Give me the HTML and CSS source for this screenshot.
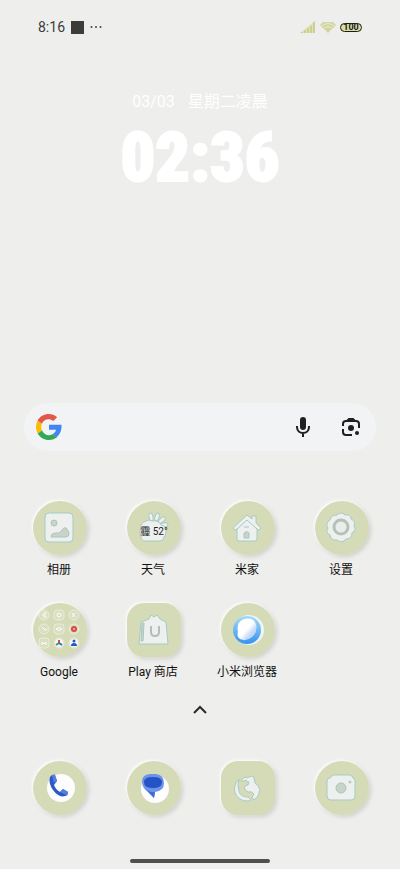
FILE: index.html
```html
<!DOCTYPE html>
<html lang="zh-CN">
<head>
<meta charset="utf-8">
<meta name="viewport" content="width=device-width, initial-scale=1">
<title>桌面</title>
<link rel="stylesheet" href="styles.css">
</head>
<body>
<header class="status">
	<div class="status_left">
		<span>8:16</span>
		<span class="block"></span>
		<svg width="12" height="4" viewBox="0 0 12 4"><circle cx="1.5" cy="2" r="1"/><circle cx="6" cy="2" r="1"/><circle cx="10.5" cy="2" r="1"/></svg>
	</div>
	<div class="status_right">
		<svg width="16" height="12" viewBox="0 0 16 12"><path d="M0 12L15 0v12z" fill="#dfe1bd"/><path d="M1 12v-1h2v1zM4 12V9h2v3zM7 12V7h2v5zM10 12V5h2v7zM13 12V2l2-2v12z" fill="#cdd08f"/></svg>
		<svg width="16" height="12" viewBox="0 0 16 12"><path d="M0 4l3-3h10l3 3-8 8z" fill="#d3d69f"/><path d="M2 5Q8 0 14 5M4 7Q8 4 12 7" fill="none" stroke="#e8e9d6"/></svg>
		<span class="battery">100</span>
	</div>
</header>

<main>
	<section class="clock">
		<div class="date"><span>03/03</span><span>星期二凌晨</span></div>
		<time class="time">02:36</time>
	</section>

	<form class="search">
		<svg width="26" height="26" viewBox="0 0 48 48">
			<path fill="#4285f4" d="M47 20H24v9h13c-1 4-3 6-6 8l7 6c6-5 10-13 9-23z"/>
			<path fill="#34a853" d="M24 48c6 0 11-2 15-5l-8-6c-8 5-17 1-20-7l-8 6c4 7 12 12 21 12z"/>
			<path fill="#fbbc05" d="M11 30c-2-4-2-8 0-12l-8-6c-4 8-4 16 0 24z"/>
			<path fill="#e45849" d="M11 18c3-9 14-11 21-5l7-7C28-4 10-1 3 12z"/>
		</svg>
		<input type="search" aria-label="Google 搜索">
		<button type="button" aria-label="语音搜索">
			<svg width="16" height="22" viewBox="0 0 16 22"><rect x="5" y="1" width="6" height="13" rx="3" fill="#1e2023"/><path d="M2 10v1c0 8 12 8 12 0v-1M8 17v4" fill="none" stroke="#1e2023" stroke-width="2"/></svg>
		</button>
		<button type="button" aria-label="智能镜头">
			<svg width="20" height="20" viewBox="0 0 20 20" fill="none" stroke="#1e2023" stroke-width="2"><path d="M2 9V7q0-3 3-3h10q3 0 3 3v4M2 12v3q0 3 3 3h6"/><path d="M6 4l2-2h4l2 2" fill="#1e2023"/><circle cx="10" cy="11" r="3" fill="#1e2023" stroke="none"/><circle cx="16" cy="16" r="2" fill="#1e2023" stroke="none"/></svg>
		</button>
	</form>

	<nav class="apps">
		<a href="#"><span class="icon">
			<svg viewBox="0 0 54 54"><rect class="line" x="12" y="12" width="28" height="29" rx="4"/><circle class="inner" cx="21" cy="22" r="3"/><path class="inner" d="M18 36q0-4 5-4 4 1 6-3 3-4 5-1l2 4q0 4-3 4z"/></svg>
		</span>相册</a>
		<a href="#"><span class="icon">
			<svg viewBox="0 0 54 54"><g class="line"><ellipse cx="24" cy="16" rx="2" ry="4" transform="rotate(-12 24 16)"/><ellipse cx="30" cy="16" rx="2" ry="4" transform="rotate(18 30 16)"/><ellipse cx="35" cy="19" rx="2" ry="4" transform="rotate(50 35 19)"/><ellipse cx="37" cy="24" rx="2" ry="4" transform="rotate(80 37 24)"/><path d="M18 40q-4 0-4-5-3-4 0-8-1-5 5-7 3-2 6 0 7-1 9 4 5 1 5 6 0 5-2 6 0 4-4 4z"/></g></svg>
			<span class="weather">霾 52°</span>
		</span>天气</a>
		<a href="#"><span class="icon">
			<svg viewBox="0 0 54 54"><path class="line" d="M12 27L26 14l5 4v-3h4v7l5 5-2 2-2-1v10q0 2-2 2H18q-2 0-2-2V28l-2 1z"/><path class="inner" fill="none" d="M16 28l10-9 10 9"/><path class="inner" d="M23 37v-5q3-3 5 0v5zM23 26h5"/></svg>
		</span>米家</a>
		<a href="#"><span class="icon">
			<svg viewBox="0 0 54 54"><path class="line" d="M22 14q4-4 8 0 6-1 6 4 5 2 3 7 3 4-2 7 0 6-6 6-4 5-9 1-6 1-7-5-5-2-2-7-3-5 2-8 1-5 7-5z"/><circle cx="26" cy="26" r="7" fill="#e9eeea" stroke="#b5c2b8" stroke-width="3"/></svg>
		</span>设置</a>
		<a href="#"><span class="icon">
			<svg viewBox="0 0 54 54">
				<g class="mini"><circle cx="11" cy="12" r="5"/><rect x="21" y="7" width="10" height="10" rx="3"/><circle cx="41" cy="12" r="5"/><circle cx="11" cy="26" r="5"/><rect x="21" y="21" width="10" height="10" rx="3"/><circle cx="41" cy="26" r="5"/><rect x="6" y="35" width="10" height="10" rx="3"/><circle cx="26" cy="40" r="5"/><circle cx="41" cy="40" r="5"/></g>
				<g fill="none" stroke="#fff"><path d="M10 10h4M9 12h4M10 14h4M39 10l3 4M42 10l-3 4M9 24l3 3 2-1M23 26q3-3 6 0-3 3-6 0M9 42v-3l2 2 2-2v3"/><circle cx="26" cy="12" r="2"/></g>
				<circle cx="41" cy="26" r="3" fill="#dc4747"/><circle cx="41" cy="26" r="1" fill="#f3c0b4"/>
				<circle cx="26" cy="40" r="4" fill="#f7f8f8"/><path d="M26 37v3" stroke="#dc4747" stroke-width="2"/><path d="M26 40l-3 2" stroke="#3c9b5b" stroke-width="2"/><path d="M26 40l3 2" stroke="#3769d3" stroke-width="2"/>
				<circle cx="41" cy="40" r="4" fill="#f7f8f8"/><circle cx="41" cy="38" r="1.5" fill="#2456c8"/><path d="M38 43q0-3 3-3t3 3z" fill="#2456c8"/>
			</svg>
		</span>Google</a>
		<a href="#"><span class="icon square">
			<svg viewBox="0 0 54 54"><path class="line" d="M14 19l8-3 2-4 3 2 3-2 3 4 6 3 2 22H12z"/><path class="inner" d="M15 20h2l-1 18h-2z"/><path d="M24 23v6q0 4 4 4t4-4v-6" fill="none" stroke="#b2bfb6" stroke-width="2"/></svg>
		</span>Play 商店</a>
		<a href="#"><span class="icon">
			<svg viewBox="0 0 54 54"><defs><linearGradient id="sky" x1="0" y1="0" x2="0" y2="1"><stop offset="0" stop-color="#a5dcf5"/><stop offset="1" stop-color="#3592ee"/></linearGradient><linearGradient id="lens" x1="0" y1="0" x2="1" y2="1"><stop offset="0.5" stop-color="#fff"/><stop offset="0.7" stop-color="#c3daf6"/></linearGradient></defs><circle cx="28" cy="27" r="15" fill="#eef6f5"/><circle cx="26" cy="27" r="14" fill="url(#sky)"/><path d="M17 34q-1-3 0-5-2-10 6-13 9-2 12 5 2 8-4 13-6 5-12 2z" fill="url(#lens)"/></svg>
		</span>小米浏览器</a>
	</nav>

	<button class="more" type="button" aria-label="所有应用">
		<svg width="16" height="10" viewBox="0 0 16 10"><path d="M2 8l6-6 6 6" fill="none" stroke="#2b2b2b" stroke-width="2"/></svg>
	</button>
</main>

<footer>
	<nav class="apps dock">
		<a href="#" aria-label="电话"><span class="icon">
			<svg viewBox="0 0 54 54"><circle cx="28" cy="27" r="14" fill="#fdfdfd"/><path d="M17 16q2-3 5-2l2 6-3 4q2 5 6 7l3-3 5 3q0 4-3 4-6 2-12-6-5-7-3-13z" fill="#2d58c8"/><path d="M19 14q3-1 3 0l2 6-3 2zM27 31l3-3 5 3q0 2-2 3z" fill="#577fe0"/></svg>
		</span></a>
		<a href="#" aria-label="信息"><span class="icon">
			<svg viewBox="0 0 54 54"><circle cx="28" cy="28" r="14" fill="#fdfdfd"/><path d="M15 20q0-6 8-7h6q8 1 8 9 0 8-9 9l-1 6-5-6q-7-3-7-11z" fill="#6c92ea"/><path d="M17 21q0-5 9-5t9 5q0 6-9 6t-9-6z" fill="#2453c8"/><path d="M18 28q6 4 10 3l-1 6z" fill="#3e68d8"/></svg>
		</span></a>
		<a href="#" aria-label="浏览器"><span class="icon square">
			<svg viewBox="0 0 54 54"><path class="line" d="M18 18q-6 6-4 14 4 8 12 8 3 0 4-1l-3-3q-8 0-9-6-2-5 0-12z"/><path class="line" d="M20 20q2-4 5-4 1 2 3 0 4-2 5 1l1 5q4 3 5 7-1 7-6 10l-2-3 2-3q-2-3-6-2-5-3-3-6l3-1 1-3q-2 1-3-2-3 2-5 1z"/></svg>
		</span></a>
		<a href="#" aria-label="相机"><span class="icon">
			<svg viewBox="0 0 54 54"><path class="line" d="M12 20q0-3 3-3l3-3h17q2 0 3 3 2 0 2 3v15q0 4-4 4H16q-4 0-4-4z"/><circle class="inner" cx="26" cy="27" r="5"/><circle class="inner" cx="35" cy="21" r="1"/></svg>
		</span></a>
	</nav>
	<div class="home_bar"></div>
</footer>
</body>
</html>
```
FILE: styles.css
```css
* {
	box-sizing: border-box;
}
body {
	margin: 0;
	min-height: 100vh;
	display: flex;
	flex-direction: column;
	background: #eeeeec;
	color: #161616;
	font-family: Roboto, "Noto Sans CJK SC", sans-serif;
	font-size: 12px;
}
svg {
	display: block;
}
button {
	border: 0;
	padding: 0;
	background: none;
	cursor: pointer;
}
.status {
	display: flex;
	justify-content: space-between;
	align-items: center;
	height: 54px;
	padding: 0 38px;
	color: #3c3c3c;
}
.status_left, .status_right {
	display: flex;
	align-items: center;
	gap: 6px;
}
.status_left {
	font-size: 14px;
	fill: #444;
}
.status_right {
	gap: 4px;
}
.block {
	width: 13px;
	height: 13px;
	background: #3c3c3a;
}
.battery {
	width: 22px;
	height: 9px;
	border: 1px solid #1c1c1c;
	border-radius: 5px;
	background: #d9dfa0;
	color: #222;
	font-size: 9px;
	font-weight: 700;
	line-height: 7px;
	text-align: center;
}
.clock {
	display: flex;
	flex-direction: column;
	align-items: center;
	height: 349px;
	padding-top: 37px;
	color: #fff;
}
.date {
	display: flex;
	gap: 13px;
	font-size: 16px;
	line-height: 22px;
}
.time {
	font-family: "Liberation Sans Narrow", "Roboto Condensed", "Open Sans Condensed", Roboto, sans-serif;
	font-size: 68px;
	font-weight: 900;
	line-height: 90px;
	-webkit-text-stroke: 2px #fff;
}
.search {
	display: flex;
	align-items: center;
	height: 48px;
	margin: 0 24px;
	padding: 0 14px 0 12px;
	border-radius: 24px;
	background: #f1f3f4;
}
.search input {
	flex: 1;
	min-width: 0;
	height: 32px;
	border: 0;
	background: none;
	font-size: 16px;
}
.search button {
	display: flex;
	justify-content: center;
	width: 22px;
	margin-left: 26px;
}
.apps {
	display: grid;
	grid-template-columns: repeat(4, 1fr);
	row-gap: 25px;
	padding: 50px 12px 0;
}
.apps a {
	display: flex;
	flex-direction: column;
	align-items: center;
	gap: 7px;
	color: #111;
	line-height: 16px;
	text-decoration: none;
}
.icon {
	position: relative;
	width: 54px;
	height: 54px;
	margin-left: 2px;
	border-radius: 50%;
	background: #d5dbb7;
	box-shadow: -1px -1px 3px #fff, 2px 2px 4px #cfd0cc;
}
.square {
	border-radius: 17px;
}
.line {
	fill: #edf0ee;
	stroke: #a7cbc5;
	stroke-width: 1;
	stroke-linejoin: round;
}
.inner {
	fill: #c9d3c9;
	stroke: #a9c6bf;
}
.inner[fill="none"] {
	fill: none;
}
.mini {
	fill: #d9dfc1;
	stroke: #e9edda;
}
.weather {
	position: absolute;
	top: 23px;
	left: 0;
	width: 100%;
	color: #1c1c1c;
	font-size: 10px;
	text-align: center;
	white-space: nowrap;
}
.more {
	display: flex;
	justify-content: center;
	width: 40px;
	margin: 25px auto 0;
}
footer {
	margin-top: auto;
	padding-bottom: 6px;
}
.dock {
	padding-top: 16px;
}
.home_bar {
	width: 35%;
	height: 4px;
	margin: 44px auto 0;
	border-radius: 2px;
	background: #50504f;
}
```
